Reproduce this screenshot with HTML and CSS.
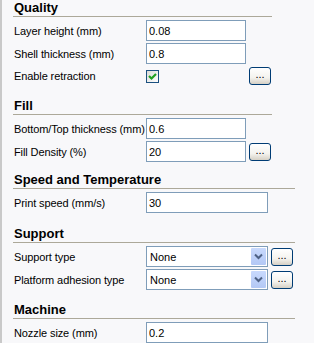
FILE: index.html
```html
<!DOCTYPE html>
<html lang="en">
<head>
    <meta charset="UTF-8">
    <title>Print settings</title>
    <link rel="stylesheet" href="styles.css">
</head>
<body>

    <div class="panel">

        <!-- Quality -->
        <div class="section">
            <div class="section-title">Quality</div>
            <div class="rows">
                <label class="row-label">Layer height (mm)</label>
                <div class="row-ctrl"><input class="field" type="text" value="0.08"></div>

                <label class="row-label">Shell thickness (mm)</label>
                <div class="row-ctrl"><input class="field" type="text" value="0.8"></div>

                <label class="row-label row-short">Enable retraction</label>
                <div class="row-ctrl row-short">
                    <div class="check-slot">
                        <span class="check">
                            <svg width="11" height="11" viewBox="0 0 11 11"><path d="M2 5 L4.5 7.5 L9 3" fill="none" stroke="#21a121" stroke-width="2.2"/></svg>
                        </span>
                    </div>
                    <button class="more">...</button>
                </div>
            </div>
        </div>

        <!-- Fill -->
        <div class="section">
            <div class="section-title">Fill</div>
            <div class="rows">
                <label class="row-label">Bottom/Top thickness (mm)</label>
                <div class="row-ctrl"><input class="field" type="text" value="0.6"></div>

                <label class="row-label">Fill Density (%)</label>
                <div class="row-ctrl">
                    <input class="field" type="text" value="20">
                    <button class="more">...</button>
                </div>
            </div>
        </div>

        <!-- Speed -->
        <div class="section section-wide section-tight">
            <div class="section-title">Speed and Temperature</div>
            <div class="rows">
                <label class="row-label">Print speed (mm/s)</label>
                <div class="row-ctrl"><input class="field field-long" type="text" value="30"></div>
            </div>
        </div>

        <!-- Support -->
        <div class="section section-wide section-loose">
            <div class="section-title">Support</div>
            <div class="rows">
                <label class="row-label">Support type</label>
                <div class="row-ctrl">
                    <div class="combo">
                        <span class="combo-text">None</span>
                        <span class="combo-arrow">
                            <svg width="9" height="7" viewBox="0 0 9 7"><path d="M1 1.5 L4.5 5 L8 1.5" fill="none" stroke="#4d6185" stroke-width="2"/></svg>
                        </span>
                    </div>
                    <button class="more">...</button>
                </div>

                <label class="row-label">Platform adhesion type</label>
                <div class="row-ctrl">
                    <div class="combo">
                        <span class="combo-text">None</span>
                        <span class="combo-arrow">
                            <svg width="9" height="7" viewBox="0 0 9 7"><path d="M1 1.5 L4.5 5 L8 1.5" fill="none" stroke="#4d6185" stroke-width="2"/></svg>
                        </span>
                    </div>
                    <button class="more">...</button>
                </div>
            </div>
        </div>

        <!-- Machine -->
        <div class="section section-wide">
            <div class="section-title">Machine</div>
            <div class="rows">
                <label class="row-label">Nozzle size (mm)</label>
                <div class="row-ctrl"><input class="field field-long" type="text" value="0.2"></div>
            </div>
        </div>

    </div>

</body>
</html>
```

FILE: styles.css
```css
/* Fond de la fenêtre */
body {
    margin: 0;
    background: #f8f8fa;
    font-family: 'Liberation Sans', Arial, sans-serif;
    font-size: 11px;
    color: #000;
    height: 343px;
    overflow: hidden;
}

.panel {
    border-left: 2px solid #c9c9c9;
    padding-left: 11px;
    height: 100%;
}

/* Sections */
.section {
    width: 259px;
    margin-top: 12px;
}

.section:first-child {
    margin-top: 0;
}

.section-wide {
    width: 282px;
}

.section-tight {
    margin-top: 10px;
}

.section-loose {
    margin-top: 13px;
}

.section-title {
    height: 16px;
    line-height: 16px;
    font-size: 13px;
    font-weight: bold;
    padding-left: 1px;
    border-bottom: 1px solid #aca899;
}

/* Grille libellé / contrôle */
.rows {
    display: grid;
    grid-template-columns: 133px auto;
    row-gap: 2px;
    margin-top: 3px;
}

.row-label {
    display: flex;
    align-items: center;
    padding-left: 1px;
    height: 21px;
    white-space: nowrap;
    letter-spacing: -0.1px;
}

.row-ctrl {
    display: flex;
    align-items: center;
    gap: 3px;
    height: 21px;
}

.row-short {
    height: 20px;
}

/* Champs texte */
.field {
    box-sizing: border-box;
    width: 100px;
    height: 21px;
    margin: 0;
    padding: 0 2px;
    border: 1px solid #7f9db9;
    background: #fff;
    font-family: 'Liberation Sans', Arial, sans-serif;
    font-size: 11px;
    color: #000;
    outline: none;
}

.field-long {
    width: 122px;
}

/* Case à cocher */
.check-slot {
    width: 100px;
}

.check {
    box-sizing: border-box;
    display: flex;
    align-items: center;
    justify-content: center;
    width: 13px;
    height: 13px;
    border: 1px solid #1c5180;
    background: linear-gradient(135deg, #dcdcd7, #fff);
}

/* Bouton "..." */
.more {
    box-sizing: border-box;
    width: 22px;
    height: 18px;
    margin: 0;
    padding: 0 0 4px;
    border: 1px solid #003c74;
    border-radius: 3px;
    background: linear-gradient(#fff, #f4f3ee 60%, #d6d0c5);
    font-family: 'Liberation Sans', Arial, sans-serif;
    font-size: 11px;
    line-height: 10px;
    color: #000;
}

/* Liste déroulante */
.combo {
    box-sizing: border-box;
    display: flex;
    align-items: stretch;
    width: 122px;
    height: 21px;
    border: 1px solid #7f9db9;
    background: #fff;
    padding: 1px;
}

.combo-text {
    flex: 1;
    display: flex;
    align-items: center;
    padding-left: 2px;
}

.combo-arrow {
    width: 15px;
    display: flex;
    align-items: center;
    justify-content: center;
    background: linear-gradient(#c8d9fd, #b3c8f5);
    border-radius: 1px;
}
```
